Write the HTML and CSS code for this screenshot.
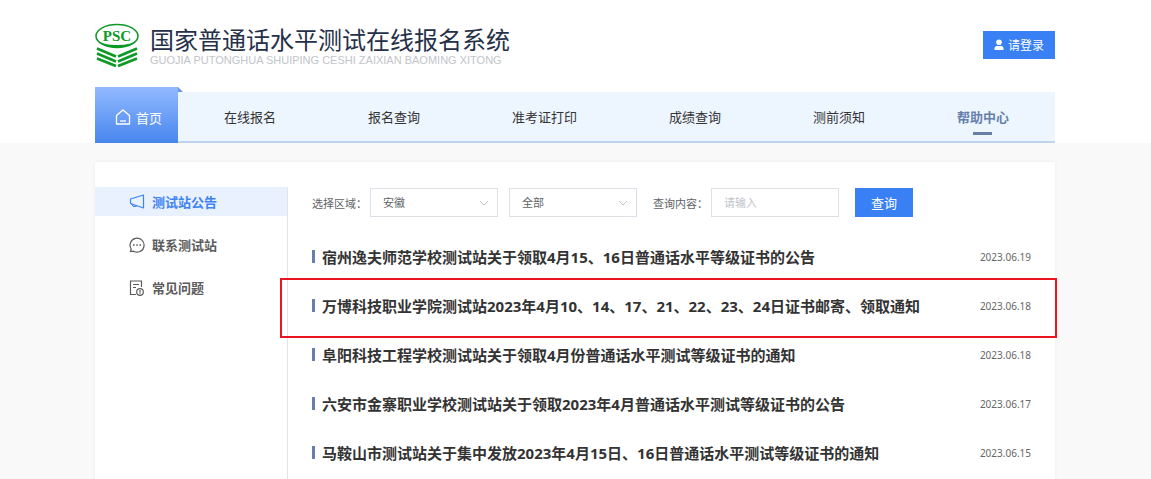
FILE: index.html
```html
<!DOCTYPE html>
<html lang="zh-CN">

<head>
    <meta charset="UTF-8">
    <meta name="viewport" content="width=device-width, initial-scale=1.0">
    <title>国家普通话水平测试在线报名系统</title>
    <link rel="stylesheet" href="styles.css">
</head>

<body>

    <header class="header">
        <div class="top">
            <a href="#" class="brand">
                <svg class="logo" viewBox="0 0 44 44" width="44" height="44">
                    <ellipse cx="22" cy="13" rx="21" ry="11.5" fill="#fff" stroke="#0d9a26" stroke-width="1.500"/>
                    <path d="M2 17 Q8 24.500 22 24.500 Q36 24.500 42 17 Q37 22 22 22 Q7 22 2 17z" fill="#0d9a26"/>
                    <text x="22" y="18" class="logo-text" text-anchor="middle">PSC</text>
                    <g fill="none" stroke="#0d9a26" stroke-width="2.800">
                        <path d="M2 25.500 L21 33.500 M42 25.500 L23 33.500"/>
                        <path d="M2 30.500 L21 38.500 M42 30.500 L23 38.500"/>
                        <path d="M2 35.500 L21 43 M42 35.500 L23 43"/>
                    </g>
                </svg>
                <span class="brand-text">
                    <span class="brand-name">国家普通话水平测试在线报名系统</span>
                    <span class="brand-pinyin">GUOJIA PUTONGHUA SHUIPING CESHI ZAIXIAN BAOMING XITONG</span>
                </span>
            </a>
            <button type="button" class="login">
                <svg viewBox="0 0 10 12" width="10" height="12" fill="#fff">
                    <circle cx="5" cy="3.200" r="2.800"/>
                    <path d="M.5 11 V9.500 Q.5 7 3 7 H7 Q9.500 7 9.500 9.500 V11z"/>
                </svg>
                请登录
            </button>
        </div>

        <nav class="nav">
            <a href="#" class="nav-home">
                <svg viewBox="0 0 16 16" width="16" height="16" fill="none" stroke="#fff" stroke-width="1.300" stroke-linejoin="round">
                    <path d="M1.500 6.500 L8 1 L14.500 6.500 V15 H1.500z"/>
                    <path d="M5 12 H11"/>
                </svg>
                首页
            </a>
            <div class="nav-links">
                <a href="#">在线报名</a>
                <a href="#">报名查询</a>
                <a href="#">准考证打印</a>
                <a href="#">成绩查询</a>
                <a href="#">测前须知</a>
                <a href="#" class="current">帮助中心</a>
            </div>
        </nav>
    </header>

    <div class="page">
        <div class="card">
            <aside class="side">
                <a href="#" class="side-link active">
                    <svg viewBox="0 0 16 16" width="16" height="16" fill="none" stroke="currentColor" stroke-width="1.200" stroke-linejoin="round">
                        <path d="M1.500 5 L14.500 1 V14 L1.500 9.500z"/>
                        <path d="M2.500 10 L4.500 12.500 L7 12.500 V11.500"/>
                    </svg>
                    测试站公告
                </a>
                <a href="#" class="side-link">
                    <svg viewBox="0 0 16 16" width="16" height="16" fill="none" stroke="currentColor" stroke-width="1.200">
                        <path d="M1.500 14.500 L2.200 12 A7 7 0 1 1 4.500 14.200z"/>
                        <path d="M4 8 H5.500 M7.300 8 H8.800 M10.500 8 H12" stroke-width="1.500"/>
                    </svg>
                    联系测试站
                </a>
                <a href="#" class="side-link">
                    <svg viewBox="0 0 16 16" width="16" height="16" fill="none" stroke="currentColor" stroke-width="1.200">
                        <path d="M7 14.500 H1.500 V1 H12.500 V7"/>
                        <path d="M4 4.500 H10 M4 7.500 H7"/>
                        <circle cx="11" cy="12" r="3.300"/>
                        <path d="M11 10 V12.700 M11 13.200 V14.200"/>
                    </svg>
                    常见问题
                </a>
            </aside>

            <main class="main">
                <form class="search">
                    <label for="area">选择区域：</label>
                    <select id="area">
                        <option>安徽</option>
                    </select>
                    <select id="station" aria-label="测试站">
                        <option>全部</option>
                    </select>
                    <label for="keyword" class="label-keyword">查询内容：</label>
                    <input type="text" id="keyword" placeholder="请输入">
                    <button type="button" class="submit">查询</button>
                </form>

                <ul class="news">
                    <li>
                        <a href="#">宿州逸夫师范学校测试站关于领取4月15、16日普通话水平等级证书的公告</a>
                        <time>2023.06.19</time>
                    </li>
                    <li class="marked">
                        <a href="#">万博科技职业学院测试站2023年4月10、14、17、21、22、23、24日证书邮寄、领取通知</a>
                        <time>2023.06.18</time>
                    </li>
                    <li>
                        <a href="#">阜阳科技工程学校测试站关于领取4月份普通话水平测试等级证书的通知</a>
                        <time>2023.06.18</time>
                    </li>
                    <li>
                        <a href="#">六安市金寨职业学校测试站关于领取2023年4月普通话水平测试等级证书的公告</a>
                        <time>2023.06.17</time>
                    </li>
                    <li>
                        <a href="#">马鞍山市测试站关于集中发放2023年4月15日、16日普通话水平测试等级证书的通知</a>
                        <time>2023.06.15</time>
                    </li>
                </ul>
            </main>
        </div>
    </div>

</body>

</html>
```

FILE: styles.css
```css
* {
    box-sizing: border-box;
}

body {
    margin: 0;
    background: #f9f9f9;
    color: #333;
    font-family: "Noto Sans", "Noto Sans CJK SC", sans-serif;
    font-size: 13px;
}

a {
    color: inherit;
    text-decoration: none;
}

button,
input,
select {
    font-family: inherit;
    border-radius: 0;
}

.header {
    background: #fff;
    padding: 0 96px 0 95px;
}

.top {
    display: flex;
    align-items: center;
    justify-content: space-between;
    padding: 23px 0 20px;
}

.brand {
    display: flex;
    align-items: center;
    gap: 11px;
}

.logo-text {
    font: bold 15px "Liberation Serif", serif;
    fill: #0d9a26;
}

.brand-text {
    display: flex;
    flex-direction: column;
    gap: 2px;
    padding-top: 3px;
    white-space: nowrap;
}

.brand-name {
    font-size: 24px;
    line-height: 24px;
    color: #253049;
}

.brand-pinyin {
    font: 11px/12px "Liberation Sans", sans-serif;
    color: #c2c5ca;
}

.login {
    display: flex;
    align-items: center;
    justify-content: center;
    gap: 4px;
    width: 72px;
    height: 28px;
    padding: 0;
    border: 0;
    background: #3880f4;
    color: #fff;
    font-size: 12px;
}

.nav {
    display: flex;
    align-items: flex-end;
}

.nav-home {
    position: relative;
    display: flex;
    align-items: center;
    justify-content: center;
    gap: 5px;
    width: 83px;
    height: 56px;
    padding: 4px 0 0 4px;
    background: linear-gradient(#92b9ff, #4886ee);
    color: #fff;
}

/* folded corner */
.nav-home::after {
    content: "";
    position: absolute;
    left: 100%;
    top: 0;
    border-bottom: 5px solid #6b98e6;
    border-right: 5px solid transparent;
}

.nav-links {
    display: flex;
    flex: 1;
    height: 51px;
    background: #edf5ff;
    border-bottom: 2px solid #c0d3ea;
}

.nav-links a {
    position: relative;
    flex: auto;
    line-height: 50px;
    text-align: center;
}

.nav-links .current {
    color: #6680ab;
    font-weight: bold;
}

.nav-links .current::after {
    content: "";
    position: absolute;
    left: 50%;
    bottom: 6px;
    width: 19px;
    height: 3px;
    margin-left: -10px;
    background: #6680ab;
}

.page {
    padding: 19px 96px 0 95px;
}

.card {
    display: flex;
    min-height: calc(100vh - 162px);
    padding-top: 25px;
    background: #fff;
    box-shadow: 0 0 4px rgba(0, 0, 0, 0.05);
}

.side {
    display: flex;
    flex-direction: column;
    gap: 14px;
    width: 193px;
    border-right: 1px solid #e2e4e8;
}

.side-link {
    display: flex;
    align-items: center;
    gap: 7px;
    height: 29px;
    padding-left: 34px;
    color: #5c5c5c;
    font-weight: bold;
}

.side-link.active {
    background: #e9f1fe;
    color: #3f82f3;
}

.main {
    flex: 1;
    padding: 1px 24px 0;
}

.search {
    display: flex;
    align-items: center;
    margin-bottom: 15px;
    font-size: 11px;
    color: #606266;
}

.search label {
    width: 58px;
    white-space: nowrap;
}

.search .label-keyword {
    margin-left: 5px;
}

.search select,
.search input {
    width: 128px;
    height: 29px;
    padding: 0 12px;
    border: 1px solid #dcdfe6;
    background: #fff;
    color: #606266;
    font-size: 11px;
}

.search select {
    appearance: none;
    margin-right: 11px;
    background: url("data:image/svg+xml,%3Csvg xmlns='http://www.w3.org/2000/svg' width='10' height='6' fill='none' stroke='%23c0c4cc'%3E%3Cpath d='M1 1l4 4 4-4'/%3E%3C/svg%3E") no-repeat right 8px center;
}

.search input::placeholder {
    color: #c0c4cc;
}

.submit {
    width: 58px;
    height: 29px;
    margin-left: 16px;
    padding: 0;
    border: 0;
    background: #3880f4;
    color: #fff;
    font-size: 13px;
}

.news {
    margin: 0;
    padding: 0;
    list-style: none;
}

.news li {
    position: relative;
    display: flex;
    align-items: center;
    height: 49px;
}

.news li::before {
    content: "";
    width: 3px;
    height: 13px;
    margin-right: 7px;
    background: #6680ab;
}

.news a {
    flex: 1;
    font-size: 15px;
    line-height: 20px;
    font-weight: bold;
}

.news time {
    font-size: 10px;
    color: #666;
}

.news .marked::after {
    content: "";
    position: absolute;
    top: -3px;
    right: -26px;
    bottom: -8px;
    left: -32px;
    border: 2px solid #ea151d;
    pointer-events: none;
}
```
